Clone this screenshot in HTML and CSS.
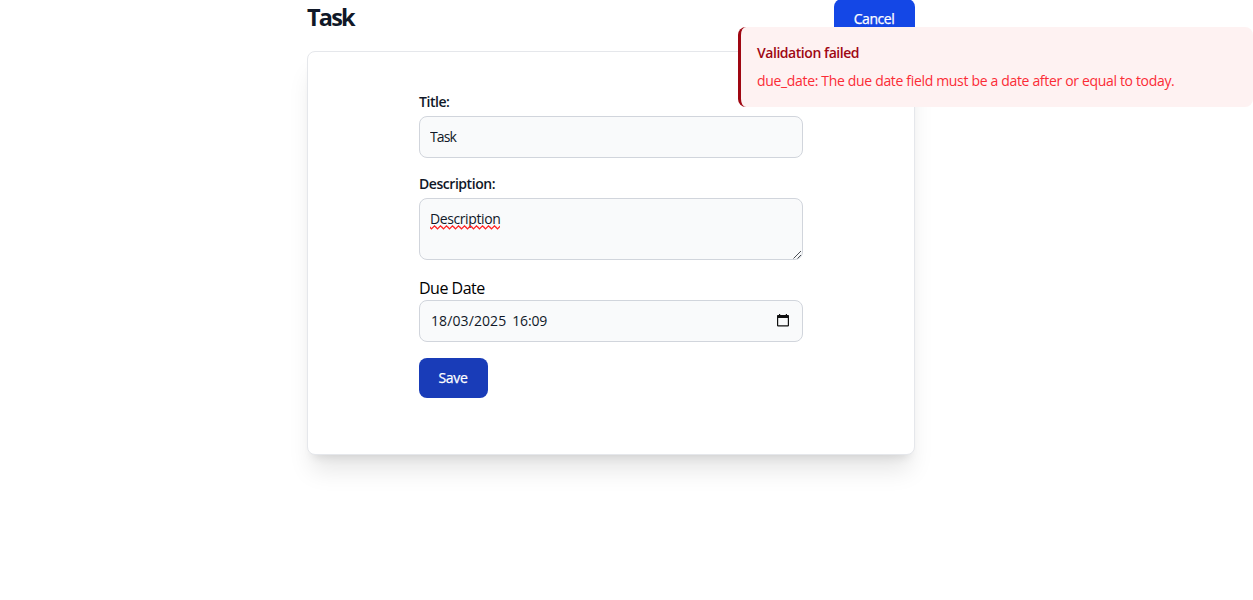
FILE: index.html
```html
<!DOCTYPE html>
<html lang="en">
<head>
<meta charset="utf-8">
<title>Task</title>
<link rel="stylesheet" href="styles.css">
</head>
<body>
<main class="page">
  <header class="header">
    <h1 class="heading"><span>Task</span></h1>
    <a class="button button-cancel"><span>Cancel</span></a>
  </header>
  <section class="card">
    <form class="form">
      <div class="field">
        <label class="label" for="title"><span class="label-title">Title:</span></label>
        <input class="control title-input" id="title" type="text" value="Task">
      </div>
      <div class="field">
        <label class="label" for="description"><span class="label-description">Description:</span></label>
        <div class="control area"><span class="misspelled">Description<svg class="squiggle" width="71" height="5" viewBox="0 0 71 5"><defs><pattern id="wave" width="6" height="5" patternUnits="userSpaceOnUse"><path d="M-1.5 0.7 L1.5 3.9 L4.5 0.9 L7.5 3.9" fill="none" stroke="#ff2020" stroke-width="1.3"/></pattern></defs><rect width="70" height="5" fill="url(#wave)"/></svg></span><svg class="grip" width="9" height="9" viewBox="0 0 9 9"><path d="M0.5 8.500 L8 1 M4.500 8.500 L8 5" fill="none" stroke="#4b4f55" stroke-width="1"/></svg></div>
      </div>
      <div class="field">
        <label class="label-plain" for="due"><span>Due Date</span></label>
        <div class="control date" id="due">
          <span class="date-value">18/03/2025</span><span class="time-value">16:09</span>
          <svg class="calendar" width="12" height="13" viewBox="0 0 12 13"><path fill="#111" fill-rule="evenodd" d="M2 0h1.2v1h5.600V0H10v1h1.200q.8 0 .8.8v9.800q0 .8-.8.8H.8q-.8 0-.8-.8V1.800q0-.8.8-.8H2zM1.200 4v7.200h9.600V4z"/></svg>
        </div>
      </div>
      <button class="button button-save" type="button"><span>Save</span></button>
    </form>
  </section>
</main>
<aside class="toast" role="alert">
  <p class="toast-title"><span>Validation failed</span></p>
  <p class="toast-text"><span>due_date: The due date field must be a date after or equal to today.</span></p>
</aside>
</body>
</html>
```
FILE: styles.css
```css
* { box-sizing: border-box; margin: 0; }
body {
  height: 600px;
  overflow: hidden;
  background: #fff;
  color: #101828;
  font-family: "Open Sans", "Noto Sans", sans-serif;
  font-size: 14px;
  line-height: 20px;
}
.page { width: 608px; margin-left: 307px; }
.header { display: flex; justify-content: space-between; height: 51px; }
.heading { padding-top: 1px; font-size: 23.5px; line-height: 32px; font-weight: 700; letter-spacing: -1.8px; }
.button {
  display: flex;
  align-items: center;
  justify-content: center;
  height: 40px;
  border: 0;
  border-radius: 8px;
  color: #fff;
  font: 500 14px/20px "Open Sans", "Noto Sans", sans-serif;
  white-space: nowrap;
}
.button-cancel { width: 81px; margin-top: -1px; padding-right: 1px; background: #1447e6; letter-spacing: -0.45px; }
.button-save { width: 69px; padding: 0 1px 0 0; background: #193cb8; letter-spacing: -0.3px; }
.button span { -webkit-text-stroke: 0.25px #fff; }
.card {
  height: 404px;
  padding: 40px 111px;
  border: 1px solid #e5e7eb;
  border-radius: 8px;
  background: #fff;
  box-shadow: 0 20px 25px -5px rgba(0, 0, 0, .1), 0 8px 10px -6px rgba(0, 0, 0, .1);
}
.form { display: flex; flex-direction: column; align-items: flex-start; gap: 16px; }
.field { width: 384px; }
.label { display: block; height: 24px; font-weight: 600; letter-spacing: -0.45px; }
.label-plain { display: block; height: 24px; padding-top: 1px; color: #000; font-size: 16px; line-height: 23px; letter-spacing: -0.5px; }
.control {
  display: block;
  width: 100%;
  height: 42px;
  padding: 10px;
  border: 1px solid #d1d5dc;
  border-radius: 8px;
  background: #f9fafb;
  color: #101828;
  font: 400 14px/20px "Open Sans", "Noto Sans", sans-serif;
  letter-spacing: -0.4px;
}
.title-input { padding: 9px 10px 11px; letter-spacing: -0.9px; }
.area { position: relative; height: 62px; }
.misspelled { position: relative; }
.squiggle { position: absolute; left: 0; bottom: -2px; }
.grip { position: absolute; right: 0; bottom: 0; }
.date { display: flex; align-items: center; padding: 0 13px 0 11px; }
.date-value { letter-spacing: 0.1px; }
.time-value { margin-left: 6px; letter-spacing: -0.2px; }
.calendar { margin: -1px 0 0 auto; }
.toast {
  position: absolute;
  top: 27px;
  right: 0;
  width: 515px;
  height: 80px;
  padding: 16px;
  border-left: 3px solid #9f0712;
  border-radius: 8px;
  background: #fef2f2;
  white-space: nowrap;
}
.toast-title { color: #9f0712; font-weight: 600; letter-spacing: -0.45px; }
.toast-text { margin-top: 8px; color: #fb2c36; letter-spacing: -0.33px; }
```
